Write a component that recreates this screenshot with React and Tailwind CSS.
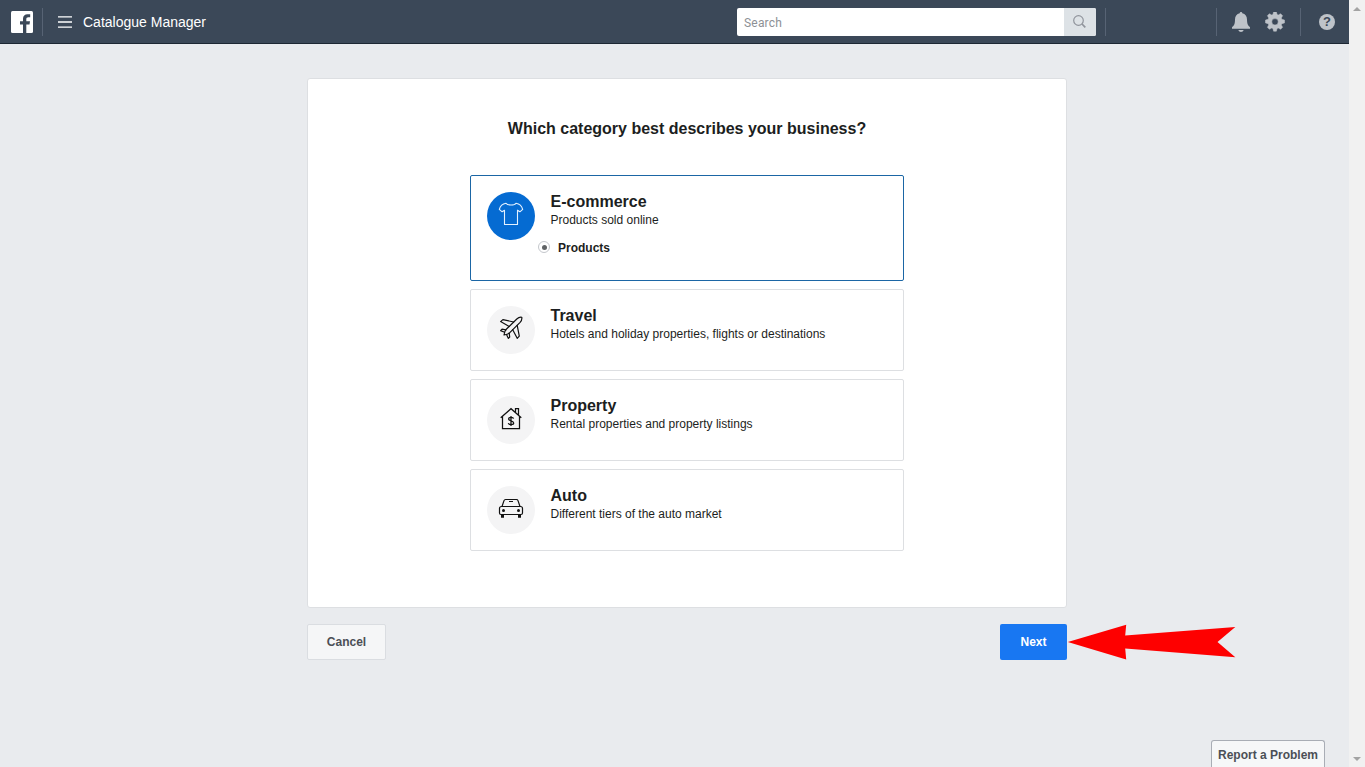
import React from 'react';

const Shirt = () => (
  <svg viewBox="0 0 48 48" className="size-12" fill="none" stroke="#e4f1ff" strokeWidth="1.1" strokeLinejoin="round">
    <path d="M19 11.2C20.5 13.6 27.5 13.6 29 11.2C32.5 11.8 34.5 13 35.7 17.3L32.9 19.8L30.5 18.2V32.5H17.5V18.2L15.1 19.8L12.3 17.3C13.5 13 15.5 11.8 19 11.2Z" />
  </svg>
);

const Plane = () => (
  <svg viewBox="0 0 48 48" className="size-12" fill="none" stroke="#111" strokeWidth="1.2" strokeLinejoin="round" strokeLinecap="round">
    <path d="M34.8 11.3C33 11 31.2 11.7 29.8 13L19.3 23.2C18 24.7 17.3 26.4 17 29C19.6 28.7 21.4 28 22.8 26.7L33.1 16.3C34.4 14.9 35.1 13.1 34.8 11.3Z" />
    <path d="M26.6 16L15.9 13.6L13.6 15.6L22.2 20.4M30.2 19.4L32.3 30.1L30.2 32.3L25.7 23.8M18.9 23.8L15 23.2L13.6 24.6L17.6 26.3M22.2 27.2L22.7 31L21.4 32.4L19.5 28.5" />
  </svg>
);

const House = () => (
  <svg viewBox="0 0 48 48" className="size-12" fill="none" stroke="#111" strokeWidth="1.25">
    <path d="M13.7 21.8L24 12.7L34.3 21.8M15.5 20.4V32.5H32.5V20.4M28.5 16.5V12.5H31.5V19.2" />
    <path d="M26.6 22.7C26.2 20.8 21.6 20.8 21.6 23C21.6 25.2 26.7 24.5 26.7 26.9C26.7 29 21.800 29 21.300 27.100M24 20V30" />
  </svg>
);

const Car = () => (
  <svg viewBox="0 0 48 48" className="size-12" fill="none" stroke="#111" strokeWidth="1.2">
    <path d="M15 20.5L17 14.6Q17.4 13.5 18.5 13.5H29.5Q30.6 13.5 31 14.6L33 20.5M22 15.500H26" />
    <path d="M14.5 20.5H33.5Q35.5 20.5 35.5 22.5V27Q35.5 28.5 34 28.5H14Q12.5 28.5 12.5 27V22.5Q12.5 20.5 14.5 20.5Z" />
    <path d="M14 28.5H17V31.7H14ZM31 28.5H34V31.7H31Z" fill="#111" stroke="none" />
    <circle cx="16.5" cy="24.5" r="1.5" fill="#111" stroke="none" />
    <circle cx="31.5" cy="24.5" r="1.5" fill="#111" stroke="none" />
  </svg>
);

const Gear = () => (
  <svg viewBox="0 0 20 20" className="size-5" fill="#bec3c9">
    <path fillRule="evenodd" d="M8.6 0h2.8l.7 2.5 1.2.5 2.3-1.3 2 2-1.3 2.3.5 1.2 2.7.9v2.8l-2.7.8-.5 1.2 1.3 2.4-2 2-2.3-1.3-1.2.5-.7 2.7H8.6l-.7-2.7-1.2-.5-2.3 1.3-2-2 1.3-2.4-.5-1.2L.5 10.900V8.100l2.700-.9.500-1.200-1.300-2.300 2-2L6.700 3l1.200-.5zM10 6.600a3.200 3.200 0 1 0 0 6.400 3.200 3.200 0 0 0 0-6.400z" stroke="#bec3c9" strokeWidth=".5" strokeLinejoin="round" />
  </svg>
);

const options = [
  { title: 'Travel', text: 'Hotels and holiday properties, flights or destinations', Icon: Plane },
  { title: 'Property', text: 'Rental properties and property listings', Icon: House },
  { title: 'Auto', text: 'Different tiers of the auto market', Icon: Car },
];

function Header() {
  return (
    <header className="flex h-11 items-center border-b border-[#1d2733] bg-[#3b4858] text-white">
      <svg viewBox="0 0 22 22" className="ml-[11px] size-[22px] shrink-0">
        <rect width="22" height="22" rx="1.5" fill="#fff" />
        <path d="M12 22V13.5H9V10.3H12V7.7C12 4.7 13.8 3.2 16.5 3.2H19.2V6.3H17.4C15.8 6.3 15.3 7 15.3 8.3V10.3H19L18.5 13.5H15.3V22Z" fill="#3b4858" />
      </svg>
      <div className="ml-[9px] h-7 w-px bg-[#576374]" />
      <svg viewBox="0 0 14 12" className="ml-[15px] h-3 w-3.5 shrink-0" stroke="#fff" strokeWidth="1.3">
        <path d="M0 .8H14M0 6H14M0 11.2H14" />
      </svg>
      <span className="ml-[11px] w-[654px] text-sm">Catalogue Manager</span>
      <div className="flex h-7 w-[359px] overflow-hidden rounded-[2px] bg-white">
        <div className="flex flex-1 items-center pl-[7px] pt-[3px] font-[Roboto] text-xs tracking-[0.2px] text-[#8d9095]">Search</div>
        <div className="flex w-8 items-center justify-center bg-[#dde2e6]">
          <svg viewBox="0 0 13 13" className="mr-px size-[13px]" fill="none" stroke="#90949c" strokeWidth="1.2">
            <circle cx="5.5" cy="5.5" r="4.8" />
            <path d="M9 9L12.3 12.3" strokeWidth="1.7" />
          </svg>
        </div>
      </div>
      <div className="ml-[9px] h-7 w-px bg-[#576374]" />
      <div className="ml-[110px] h-7 w-px bg-[#576374]" />
      <svg viewBox="0 0 18 20" className="ml-[15px] h-5 w-[18px]" fill="#bec3c9">
        <path d="M9 0C9.9 0 10.3.6 10.3 1.3C13.4 2 15 4.5 15 7.5C15 12 16 13.5 18 15.2V16.8H0V15.2C2 13.5 3 12 3 7.5C3 4.5 4.6 2 7.7 1.3C7.7.6 8.1 0 9 0ZM6.3 18H11.7C11.2 19.3 10.2 20 9 20S6.8 19.3 6.3 18Z" />
      </svg>
      <div className="ml-[15px]"><Gear /></div>
      <div className="ml-[15px] h-7 w-px bg-[#576374]" />
      <div className="ml-[18px] flex size-4 items-center justify-center rounded-full bg-[#bec3c9] text-[13px] font-bold leading-4 text-[#3b4858]">?</div>
    </header>
  );
}

export default function App() {
  return (
    <div className="flex h-[767px] w-[1365px] overflow-hidden bg-[#e9ebee] font-['Liberation_Sans',Arial,sans-serif] text-[#1c1e21]">
      <div className="relative flex w-[1349px] flex-col">
        <Header />
        <main className="ml-[307px] mt-[34px] w-[760px]">
          <section className="flex h-[530px] flex-col items-center rounded-[3px] border border-[#dddfe2] bg-white">
            <h1 className="mt-10 whitespace-nowrap text-base font-bold leading-5">Which category best describes your business?</h1>
            <div className="mt-9 flex w-[434px] flex-col gap-2">
              <div className="flex h-[106px] rounded-[2px] border border-[#1b66a5] p-4">
                <div className="size-12 shrink-0 rounded-full bg-[#056bd2]"><Shirt /></div>
                <div className="ml-[15.5px] mt-px">
                  <h2 className="text-base font-bold leading-[18px]">E-commerce</h2>
                  <p className="text-xs leading-[18px]">Products sold online</p>
                  <label className="-ml-[12.5px] mt-3 flex items-start text-xs font-bold leading-[15px]">
                    <span className="mr-2 flex size-3 items-center justify-center rounded-full border border-[#c4c7cc]">
                      <span className="size-[5px] rounded-full bg-[#606366]" />
                    </span>
                    Products
                  </label>
                </div>
              </div>
              {options.map(({ title, text, Icon }) => (
                <div key={title} className="flex h-[82px] rounded-[2px] border border-[#dddfe2] p-4">
                  <div className="size-12 shrink-0 rounded-full bg-[#f4f4f5]"><Icon /></div>
                  <div className="ml-[15.5px] mt-px">
                    <h2 className="text-base font-bold leading-[18px]">{title}</h2>
                    <p className="whitespace-nowrap text-xs leading-[18px]">{text}</p>
                  </div>
                </div>
              ))}
            </div>
          </section>
          <div className="mt-4 flex justify-between">
            <button className="h-9 w-[79px] rounded-[2px] border border-[#dadde1] bg-[#f5f6f7] text-xs font-bold text-[#4b4f56]">Cancel</button>
            <button className="h-9 w-[67px] rounded-[2px] bg-[#1877f2] text-xs font-bold text-white">Next</button>
          </div>
        </main>
        <svg viewBox="0 0 170 36" className="absolute left-[1067px] top-[624px] h-9 w-[170px]" fill="#fe0000">
          <path d="M.8 18L59.2.8L58.2 11.5L168.300 3L150.500 18L168.300 33.300L58.200 24.500L59.200 35.500Z" />
        </svg>
        <button className="absolute bottom-0 right-6 h-[27px] w-[114px] whitespace-nowrap rounded-t-[3px] border border-b-0 border-[#a9adb5] bg-[#f6f7f8] pt-0.5 text-xs font-bold text-[#4b4f56]">Report a Problem</button>
      </div>
      <div className="flex w-4 flex-col items-center justify-between bg-[#f1f1f1] pb-1.5 pt-[7px]">
        <svg viewBox="0 0 8 4" className="h-1 w-2" fill="#a3a3a3"><path d="M4 0L8 4H0Z" /></svg>
        <svg viewBox="0 0 8 4" className="h-1 w-2" fill="#a3a3a3"><path d="M0 0H8L4 4Z" /></svg>
      </div>
    </div>
  );
}
